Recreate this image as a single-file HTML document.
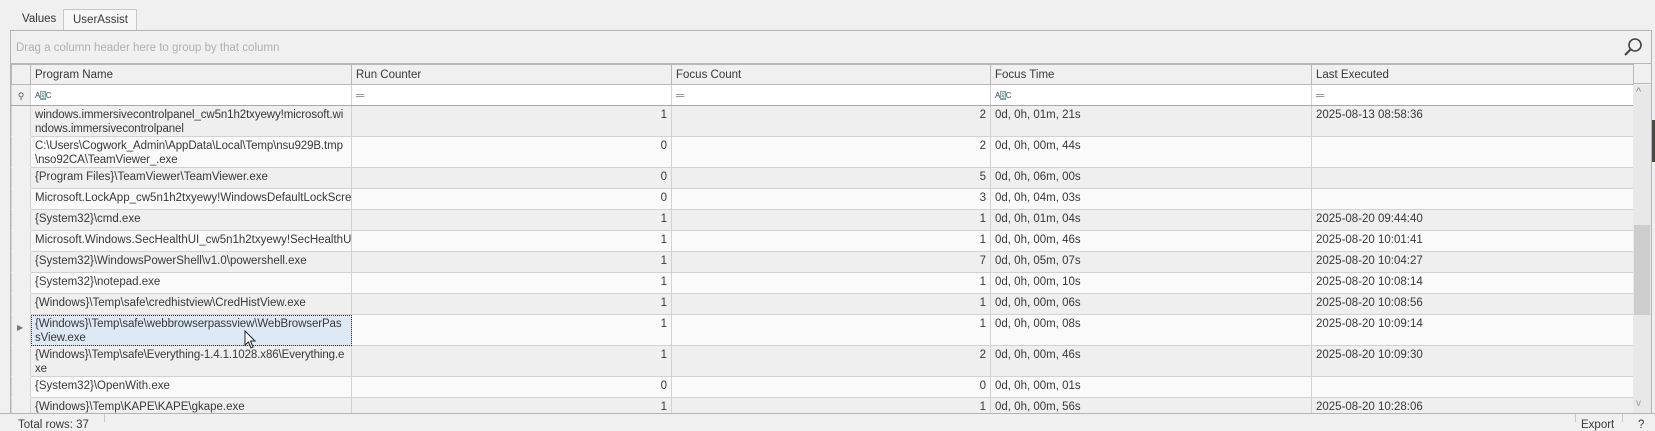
<!DOCTYPE html>
<html><head><meta charset="utf-8"><style>
*{margin:0;padding:0;box-sizing:border-box}
body{width:1655px;height:422px;overflow:hidden;background:#f0f0f0;font-family:"Liberation Sans",Tahoma,sans-serif;font-size:11.5px;color:#383838;position:relative}
.abs{position:absolute}
.tab{position:absolute;top:9px;height:21px;line-height:20px;padding:0 10px}
table{position:absolute;left:11px;top:64px;border-collapse:collapse;table-layout:fixed;width:1622px}
td{border:1px solid #d2d2d2;vertical-align:top;padding:2px 4px 0 4px;line-height:14px;overflow:hidden;white-space:nowrap}
td.w{white-space:normal;word-break:break-all;letter-spacing:-0.1px}
td.r{text-align:right}
tr.h td{background:#f0f0f0;border-color:#b8b8b8;height:20px;padding-top:3px}
tr.f td{background:#fff;border-bottom-color:#a8a8a8;height:21px;padding-top:4px}
tr.g td{background:#efefef}
tr.l td{background:#fafafa}
tr.s td{height:21px}
tr.d td{height:31px}
td.ind{background:#f0f0f0!important;border-top-color:#f0f0f0;border-bottom-color:#f0f0f0;padding:0}
</style></head><body>
<div class="tab" style="left:12px;color:#333">Values</div>
<div class="tab" style="left:63px;width:74px;background:#f7f7f7;border:1px solid #c8c8c8;border-bottom:none;padding:0 9px">UserAssist</div>
<div class="abs" style="left:10px;top:30px;width:1642px;height:386px;border:1px solid #b4b4b4;background:#f0f0f0"></div>
<div class="abs" style="left:11px;top:31px;width:1640px;height:33px;background:#f0f0f0;border-bottom:1px solid #b8b8b8"></div>
<div class="abs" style="left:16px;top:42px;color:#b0b0b0">Drag a column header here to group by that column</div>
<svg class="abs" style="left:1622px;top:36px" width="22" height="22" viewBox="0 0 22 22"><circle cx="13" cy="9" r="6" fill="none" stroke="#444" stroke-width="1.6"/><path d="M9 13 L3 19" stroke="#444" stroke-width="2"/></svg>
<table>
<colgroup><col style="width:19px"><col style="width:321px"><col style="width:320px"><col style="width:319px"><col style="width:321px"><col style="width:322px"></colgroup>
<tr class="h"><td></td><td>Program Name</td><td>Run Counter</td><td>Focus Count</td><td>Focus Time</td><td>Last Executed</td></tr>
<tr class="f"><td style="background:#f0f0f0;text-align:center;font-size:9px;color:#555;padding:4px 0 0">&#9906;</td><td style="font-size:8px;color:#444">A<span style="background:#7aa;color:#fff">B</span>C</td><td style="color:#888">═</td><td style="color:#888">═</td><td style="font-size:8px;color:#444">A<span style="background:#7aa;color:#fff">B</span>C</td><td style="color:#888">═</td></tr>
<tr class="g d"><td class="ind"></td><td class="w">windows.immersivecontrolpanel_cw5n1h2txyewy!microsoft.windows.immersivecontrolpanel</td><td class="r">1</td><td class="r">2</td><td>0d, 0h, 01m, 21s</td><td>2025-08-13 08:58:36</td></tr>
<tr class="l d"><td class="ind"></td><td class="w">C:\Users\Cogwork_Admin\AppData\Local\Temp\nsu929B.tmp\nso92CA\TeamViewer_.exe</td><td class="r">0</td><td class="r">2</td><td>0d, 0h, 00m, 44s</td><td></td></tr>
<tr class="g s"><td class="ind"></td><td>{Program Files}\TeamViewer\TeamViewer.exe</td><td class="r">0</td><td class="r">5</td><td>0d, 0h, 06m, 00s</td><td></td></tr>
<tr class="l s"><td class="ind"></td><td>Microsoft.LockApp_cw5n1h2txyewy!WindowsDefaultLockScreen</td><td class="r">0</td><td class="r">3</td><td>0d, 0h, 04m, 03s</td><td></td></tr>
<tr class="g s"><td class="ind"></td><td>{System32}\cmd.exe</td><td class="r">1</td><td class="r">1</td><td>0d, 0h, 01m, 04s</td><td>2025-08-20 09:44:40</td></tr>
<tr class="l s"><td class="ind"></td><td>Microsoft.Windows.SecHealthUI_cw5n1h2txyewy!SecHealthUI</td><td class="r">1</td><td class="r">1</td><td>0d, 0h, 00m, 46s</td><td>2025-08-20 10:01:41</td></tr>
<tr class="g s"><td class="ind"></td><td>{System32}\WindowsPowerShell\v1.0\powershell.exe</td><td class="r">1</td><td class="r">7</td><td>0d, 0h, 05m, 07s</td><td>2025-08-20 10:04:27</td></tr>
<tr class="l s"><td class="ind"></td><td>{System32}\notepad.exe</td><td class="r">1</td><td class="r">1</td><td>0d, 0h, 00m, 10s</td><td>2025-08-20 10:08:14</td></tr>
<tr class="g s"><td class="ind"></td><td>{Windows}\Temp\safe\credhistview\CredHistView.exe</td><td class="r">1</td><td class="r">1</td><td>0d, 0h, 00m, 06s</td><td>2025-08-20 10:08:56</td></tr>
<tr class="l d"><td class="ind" style="color:#777;font-size:8px;padding:6px 0 0 5px">&#9654;</td><td class="w" style="background:#dde9f5;outline:1px dotted #333;outline-offset:-1px">{Windows}\Temp\safe\webbrowserpassview\WebBrowserPassView.exe</td><td class="r">1</td><td class="r">1</td><td>0d, 0h, 00m, 08s</td><td>2025-08-20 10:09:14</td></tr>
<tr class="g d"><td class="ind"></td><td class="w">{Windows}\Temp\safe\Everything-1.4.1.1028.x86\Everything.exe</td><td class="r">1</td><td class="r">2</td><td>0d, 0h, 00m, 46s</td><td>2025-08-20 10:09:30</td></tr>
<tr class="l s"><td class="ind"></td><td>{System32}\OpenWith.exe</td><td class="r">0</td><td class="r">0</td><td>0d, 0h, 00m, 01s</td><td></td></tr>
<tr class="g s"><td class="ind"></td><td>{Windows}\Temp\KAPE\KAPE\gkape.exe</td><td class="r">1</td><td class="r">1</td><td>0d, 0h, 00m, 56s</td><td>2025-08-20 10:28:06</td></tr>
</table>
<div class="abs" style="left:1633px;top:64px;width:18px;height:20px;border-left:1px solid #b8b8b8;border-bottom:1px solid #b8b8b8;background:#f0f0f0"></div>
<div class="abs" style="left:1633px;top:85px;width:18px;height:328px;background:#e8e8e8"></div>
<div class="abs" style="left:1636px;top:86px;color:#888;font-size:11px">^</div>
<div class="abs" style="left:1634px;top:225px;width:16px;height:90px;background:#cdcdcd"></div>
<div class="abs" style="left:1636px;top:398px;color:#999;font-size:10px">v</div>
<div class="abs" style="left:0;top:413px;width:1655px;height:9px;background:#f0f0f0;border-top:1px solid #b4b4b4"></div>
<div class="abs" style="left:18px;top:419px">Total rows: 37</div>
<div class="abs" style="left:104px;top:414px;width:1px;height:8px;background:#c8c8c8"></div>
<div class="abs" style="left:1575px;top:414px;width:1px;height:8px;background:#c8c8c8"></div>
<div class="abs" style="left:1581px;top:419px">Export</div>
<div class="abs" style="left:1622px;top:414px;width:1px;height:8px;background:#c8c8c8"></div>
<div class="abs" style="left:1638px;top:419px">?</div>
<div class="abs" style="left:1652px;top:120px;width:3px;height:42px;background:#4a4a40"></div>
<svg class="abs" style="left:244px;top:330px" width="14" height="20" viewBox="0 0 14 20"><path d="M1 1 L1 15 L4.5 12 L7 18 L9 17 L6.5 11 L11 11 Z" fill="#fff" stroke="#222" stroke-width="1"/></svg>
</body></html>
